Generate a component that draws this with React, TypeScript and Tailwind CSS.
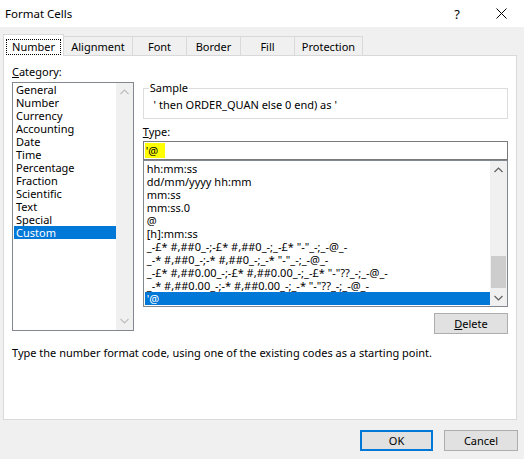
import React from "react";

const categories = [
  "General",
  "Number",
  "Currency",
  "Accounting",
  "Date",
  "Time",
  "Percentage",
  "Fraction",
  "Scientific",
  "Text",
  "Special",
  "Custom",
];

const types = [
  "hh:mm:ss",
  "dd/mm/yyyy hh:mm",
  "mm:ss",
  "mm:ss.0",
  "@",
  "[h]:mm:ss",
  '_-£* #,##0_-;-£* #,##0_-;_-£* "-"_-;_-@_-',
  '_-* #,##0_-;-* #,##0_-;_-* "-"_-;_-@_-',
  '_-£* #,##0.00_-;-£* #,##0.00_-;_-£* "-"??_-;_-@_-',
  '_-* #,##0.00_-;-* #,##0.00_-;_-* "-"??_-;_-@_-',
  "'@",
];

function Chevron({ up, color }: { up: boolean; color: string }) {
  return (
    <svg width="9" height="6" viewBox="0 0 9 6">
      <path
        d={up ? "M0.5 5 L4.5 1 L8.5 5" : "M0.5 1 L4.5 5 L8.5 1"}
        fill="none"
        stroke={color}
        strokeWidth="1.2"
      />
    </svg>
  );
}

export default function App() {
  return (
    <div className="w-[524px] h-[459px] bg-[#f0f0f0] text-[11px] text-black font-['Noto_Sans','Open_Sans',sans-serif] leading-[13px] overflow-hidden flex flex-col">
      {/* Title bar */}
      <div className="h-[27px] bg-white flex items-center pl-[5px] shrink-0">
        <span className="text-[11.5px] leading-[14px]">Format Cells</span>
        <div className="ml-auto flex items-center">
          <span className="text-[13px] leading-[14px] mr-[36px]">?</span>
          <svg width="11" height="11" viewBox="0 0 11 11" className="mr-[17px]">
            <path d="M0.5 0.5 L10.5 10.5 M10.5 0.5 L0.5 10.5" stroke="#000" strokeWidth="1" />
          </svg>
        </div>
      </div>

      {/* Tabs */}
      <div className="h-[28px] flex items-end pl-[3px] shrink-0">
        <div className="relative z-10 -mb-px h-[22px] w-[61px] bg-white border border-b-0 border-[#d9d9d9] flex items-start justify-center pt-[4px]">
          <span className="border border-dotted border-black px-[5px] leading-[14px] h-[16px]">Number</span>
        </div>
        <div className="h-[19px] w-[69px] border border-l-0 border-b-0 border-[#d9d9d9] flex items-center justify-center">Alignment</div>
        <div className="h-[19px] w-[54px] border border-l-0 border-b-0 border-[#d9d9d9] flex items-center justify-center">Font</div>
        <div className="h-[19px] w-[54px] border border-l-0 border-b-0 border-[#d9d9d9] flex items-center justify-center">Border</div>
        <div className="h-[19px] w-[54px] border border-l-0 border-b-0 border-[#d9d9d9] flex items-center justify-center">Fill</div>
        <div className="h-[19px] w-[68px] border border-l-0 border-b-0 border-[#d9d9d9] flex items-center justify-center">Protection</div>
      </div>

      {/* Panel */}
      <div className="ml-[3px] w-[514px] h-[365px] shrink-0 border border-[#d9d9d9] bg-white px-[8px] pt-[9px]">
        <div className="flex gap-[9px]">
          {/* Left column */}
          <div className="flex flex-col w-[122px]">
            <div className="leading-[14px] h-[14px]">
              <u>C</u>ategory:
            </div>
            <div className="mt-[3px] h-[249px] border border-[#828790] flex">
              <div className="flex-1 flex flex-col pl-[1px]">
                {categories.map((c) => (
                  <div
                    key={c}
                    className={
                      c === "Custom"
                        ? "h-[13px] leading-[13px] pl-[2px] bg-[#0078d7] text-white"
                        : "h-[13px] leading-[13px] pl-[2px]"
                    }
                  >
                    {c}
                  </div>
                ))}
              </div>
              <div className="w-[17px] bg-[#f0f0f0] flex flex-col items-center justify-between py-[6px]">
                <Chevron up color="#bfbfbf" />
                <Chevron up={false} color="#bfbfbf" />
              </div>
            </div>
          </div>

          {/* Right column */}
          <div className="flex flex-col w-[366px] mt-[16px]">
            <fieldset className="border border-[#dcdcdc] h-[38px] px-[6px]">
              <legend className="px-[1px] ml-[-1px] leading-[14px]">Sample</legend>
              <div className="leading-[14px] mt-[3px] pl-[1px]">&nbsp;' then ORDER_QUAN else 0 end) as '</div>
            </fieldset>
            <div className="mt-[6px] leading-[14px] h-[14px]">
              <u>T</u>ype:
            </div>
            <div className="mt-[2px] h-[19px] border border-[#7a7a7a] flex items-center pl-[1px]">
              <span className="bg-[#ffff00] px-[1px] h-[15px] leading-[15px] pr-[7px]">'@</span>
            </div>
            <div className="h-[147px] border border-[#828790] flex">
              <div className="flex-1 flex flex-col pl-[1px] pt-[1px] overflow-hidden">
                {types.map((t, i) => (
                  <div
                    key={i}
                    className={
                      i === types.length - 1
                        ? "h-[13px] leading-[13px] pl-[2px] bg-[#0078d7] text-white whitespace-pre"
                        : "h-[13px] leading-[13px] pl-[2px] whitespace-pre"
                    }
                  >
                    {t}
                  </div>
                ))}
              </div>
              <div className="w-[17px] bg-[#f0f0f0] flex flex-col items-center pt-[6px] pb-[5px]">
                <Chevron up color="#606060" />
                <div className="flex-1" />
                <div className="w-[15px] h-[32px] bg-[#cdcdcd] mb-[7px]" />
                <Chevron up={false} color="#606060" />
              </div>
            </div>
            <button className="self-end mt-[6px] w-[74px] h-[21px] border border-[#adadad] bg-[#e1e1e1] leading-[14px]">
              <u>D</u>elete
            </button>
          </div>
        </div>
        <div className="mt-[12px] leading-[14px]">
          Type the number format code, using one of the existing codes as a starting point.
        </div>
      </div>

      {/* Buttons */}
      <div className="mt-[10px] flex justify-end gap-[11px] pr-[6px]">
        <button className="w-[73px] h-[21px] border-2 border-[#0078d7] bg-[#e1e1e1] leading-[14px]">OK</button>
        <button className="w-[74px] h-[21px] border border-[#adadad] bg-[#e1e1e1] leading-[14px]">Cancel</button>
      </div>
    </div>
  );
}
